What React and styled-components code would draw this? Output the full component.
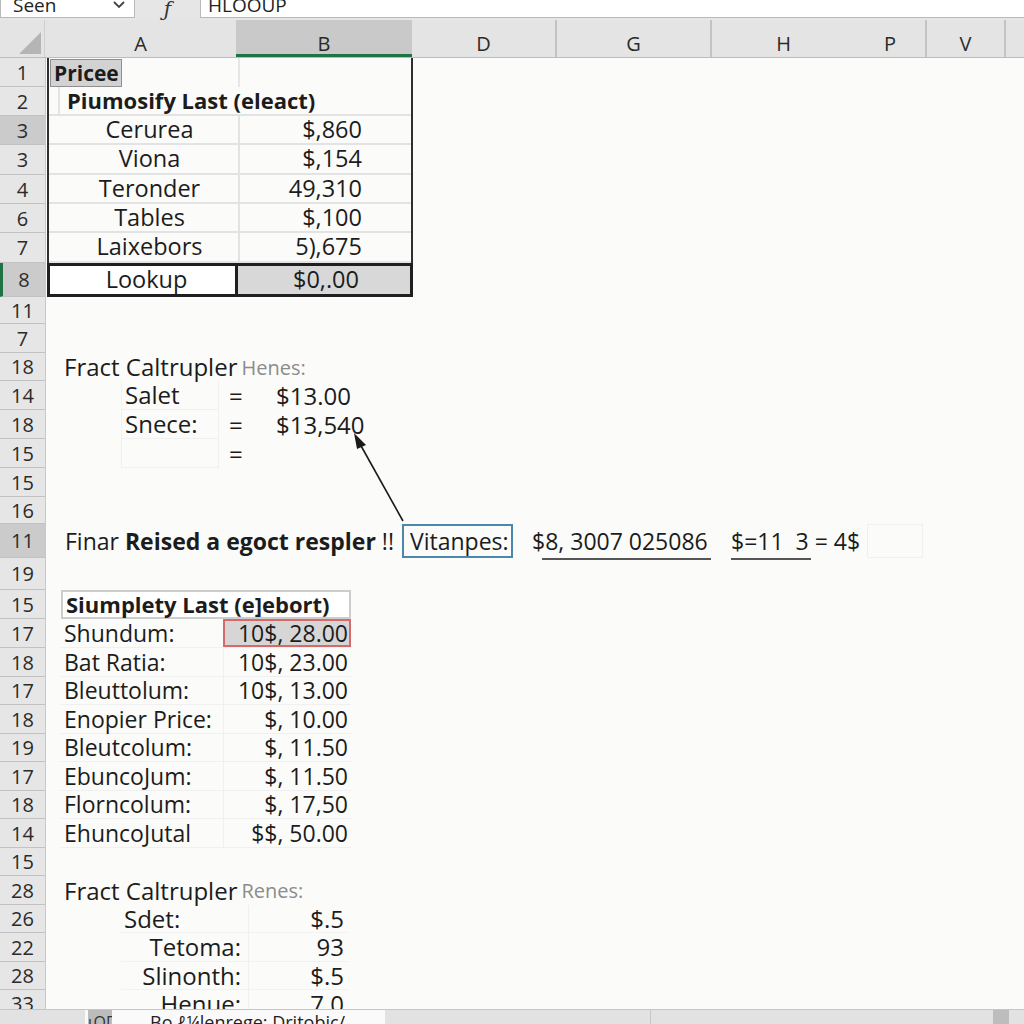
import React from 'react';
import styled, { createGlobalStyle, css } from 'styled-components';

const GlobalStyle = createGlobalStyle`
  html, body {
    margin: 0;
    padding: 0;
    background: #fbfbf9;
  }
  body {
    font-family: "Open Sans", "Noto Sans", sans-serif;
    line-height: 1.15;
    color: #1c1c1c;
  }
`;

const Window = styled.div`
  width: 1024px;
  height: 1024px;
  position: relative;
  overflow: hidden;
  background: #fbfbf9;
  display: flex;
  flex-direction: column;
`;

/* ---------- formula bar ---------- */

const FormulaBar = styled.div`
  height: 20px;
  flex: none;
  background: #e6e6e6;
  display: flex;
  align-items: flex-end;
  padding-bottom: 2px;
  box-sizing: border-box;
  overflow: hidden;
`;

const NameBox = styled.div`
  width: 135px;
  height: 30px;
  background: #fff;
  border: 1px solid #b9b9b9;
  box-sizing: border-box;
  display: flex;
  align-items: flex-end;
  justify-content: space-between;
  padding: 0 8px 1px 12px;
  font-size: 19px;
  line-height: 22px;
  color: #222;
`;

const Chevron = styled.svg`
  width: 14px;
  height: 10px;
  margin-bottom: 6px;
`;

const FxGlyph = styled.div`
  width: 65px;
  text-align: center;
  font-family: "DejaVu Serif", serif;
  font-style: italic;
  font-size: 20px;
  line-height: 18px;
  color: #333;
`;

const FormulaInput = styled.div`
  flex: 1;
  height: 30px;
  background: #fff;
  border: 1px solid #b9b9b9;
  border-right: none;
  box-sizing: border-box;
  display: flex;
  align-items: flex-end;
  padding: 0 0 1px 7px;
  font-size: 19px;
  line-height: 22px;
  color: #222;
`;

/* ---------- column header ---------- */

const HeaderRow = styled.div`
  height: 38px;
  flex: none;
  display: flex;
  background: #e4e4e4;
  border-bottom: 1px solid #bdbdbd;
  box-sizing: border-box;
`;

const Corner = styled.div`
  width: 45px;
  flex: none;
  border-right: 1px solid #cfcfcf;
  display: flex;
  align-items: flex-end;
  justify-content: flex-end;
  padding: 0 3px 3px 0;
  box-sizing: border-box;
`;

const ColHead = styled.div`
  width: ${p => p.$w}px;
  flex: none;
  display: flex;
  align-items: center;
  justify-content: center;
  padding-top: 10px;
  box-sizing: border-box;
  font-size: 20px;
  color: #2a2a2a;
  border-left: ${p => (p.$line ? '2px solid #c3c3c3' : 'none')};
  ${p =>
    p.$active &&
    css`
      background: #c9c9c9;
      border-bottom: 3px solid #217346;
      padding-top: 13px;
    `}
`;

/* ---------- sheet body ---------- */

const Sheet = styled.div`
  flex: 1;
  display: flex;
  overflow: hidden;
`;

const RowHeads = styled.div`
  width: 45px;
  flex: none;
  display: flex;
  flex-direction: column;
  background: #e6e6e6;
  border-right: 1px solid #c8c8c8;
`;

const RowHead = styled.div`
  height: ${p => p.$h}px;
  flex: none;
  box-sizing: border-box;
  display: flex;
  align-items: center;
  justify-content: center;
  font-size: 20px;
  color: #2b2b2b;
  border-bottom: 1px solid #c2c2c2;
  ${p =>
    p.$active &&
    css`
      background: #cbcbcb;
    `}
  ${p =>
    p.$selected &&
    css`
      border-left: 3px solid #217346;
    `}
`;

const Canvas = styled.div`
  flex: 1;
  display: flex;
  flex-direction: column;
`;

const Spacer = styled.div`
  height: ${p => p.$h}px;
  flex: none;
`;

/* ---------- table 1 ---------- */

const Frame = styled.div`
  width: 366px;
  margin-left: 1px;
  border-left: 2px solid #2f2f2f;
  border-right: 2px solid #2f2f2f;
  box-sizing: border-box;
  display: flex;
  flex-direction: column;
  flex: none;
`;

const TRow = styled.div`
  height: ${p => p.$h}px;
  display: flex;
  flex: none;
  box-sizing: border-box;
  font-size: 23.5px;
  border-bottom: ${p => (p.$line ? '2px solid #e3e3e3' : 'none')};
`;

const TCell = styled.div`
  width: ${p => p.$w}px;
  flex: none;
  box-sizing: border-box;
  display: flex;
  align-items: center;
  justify-content: ${p => p.$justify || 'flex-start'};
  padding: ${p => p.$pad || '0'};
  font-weight: ${p => (p.$bold ? 700 : 400)};
  font-size: ${p => (p.$bold ? '22px' : 'inherit')};
  border-left: ${p => p.$divider || 'none'};
`;

const InnerRule = styled.span`
  align-self: stretch;
  border-left: 2px solid #e3e3e3;
  margin: 0 7px 0 -8px;
`;

const PriceChip = styled.div`
  margin: 1px 0 0 1px;
  padding: 0 2px 0 3px;
  height: 26px;
  display: flex;
  align-items: center;
  background: #d2d2d2;
  border: 1px solid #8f8f8f;
  font-weight: 700;
  font-size: 21px;
`;

const LookupRow = styled.div`
  height: 34px;
  display: flex;
  flex: none;
  margin-left: -2px;
  margin-right: -2px;
  font-size: 23.5px;
`;

const LookupCell = styled.div`
  width: ${p => p.$w}px;
  box-sizing: border-box;
  border: 3px solid #1f1f1f;
  margin-left: ${p => (p.$shift ? '-3px' : '0')};
  background: ${p => (p.$fill ? '#d8d8d8' : '#fff')};
  display: flex;
  align-items: center;
  justify-content: center;
  padding: ${p => p.$pad || '0'};
`;

/* ---------- calculator blocks ---------- */

const Block = styled.div`
  display: flex;
  flex-direction: column;
  flex: none;
  font-size: 24px;
`;

const BlockTitle = styled.div`
  height: ${p => p.$h || 28}px;
  display: flex;
  align-items: center;
  padding-left: 18px;
  white-space: pre;
`;

const Muted = styled.span`
  color: #8c8c8c;
  font-size: 20px;
  margin-left: 4px;
`;

const CalcRow = styled.div`
  height: ${p => p.$h || 29}px;
  display: flex;
  align-items: center;
`;

const CalcLabel = styled.div`
  width: 98px;
  height: 100%;
  margin-left: 75px;
  box-sizing: border-box;
  display: flex;
  align-items: center;
  padding-left: 3px;
  border: 1px solid #f0f0f0;
  border-top: none;
`;

const Equals = styled.div`
  width: 57px;
  padding-left: 10px;
  box-sizing: border-box;
`;

const CalcValue = styled.div``;

/* ---------- result row ---------- */

const ResultRow = styled.div`
  height: 34px;
  display: flex;
  align-items: center;
  flex: none;
  font-size: 23px;
  white-space: pre;
`;

const ResultText = styled.div`
  width: 356px;
  padding-left: 19px;
  box-sizing: border-box;
`;

const Bold = styled.b`
  font-weight: 700;
`;

const FocusBox = styled.div`
  height: 34px;
  width: 111px;
  box-sizing: border-box;
  border: 2px solid #4d87a9;
  display: flex;
  align-items: center;
  padding-left: 6px;
`;

const Underlined = styled.div`
  position: relative;
  margin-left: ${p => p.$ml}px;
  width: ${p => p.$w}px;
  &::after {
    content: '';
    position: absolute;
    left: ${p => p.$ul}px;
    width: ${p => p.$ulw}px;
    bottom: -6px;
    border-bottom: 2px solid #555;
  }
`;

const GhostBox = styled.div`
  width: 56px;
  height: 34px;
  margin-left: 10px;
  border: 1px solid #f0f0f0;
  box-sizing: border-box;
`;

/* ---------- table 2 ---------- */

const ListTable = styled.div`
  margin-left: 15px;
  width: 290px;
  display: flex;
  flex-direction: column;
  flex: none;
  font-size: 23px;
`;

const ListTitle = styled.div`
  height: 29px;
  box-sizing: border-box;
  border: 2px solid #cdcdcd;
  background: #fff;
  display: flex;
  align-items: center;
  padding-left: 3px;
  font-weight: 700;
  font-size: 22px;
`;

const ListRow = styled.div`
  height: ${p => p.$h}px;
  display: flex;
  box-sizing: border-box;
  border-bottom: 1px solid #f0f0f0;
`;

const ListLabel = styled.div`
  width: 162px;
  display: flex;
  align-items: center;
  padding-left: 3px;
  box-sizing: border-box;
  white-space: nowrap;
`;

const ListValue = styled.div`
  flex: 1;
  display: flex;
  align-items: center;
  justify-content: flex-end;
  padding-right: 3px;
  box-sizing: border-box;
  border-left: 1px solid #f0f0f0;
  white-space: pre;
  ${p =>
    p.$hot &&
    css`
      background: #d6d6d6;
      border: 2px solid #d66a6a;
      padding-right: 1px;
    `}
`;

/* ---------- lower block ---------- */

const SumRow = styled.div`
  height: ${p => p.$h}px;
  display: flex;
  align-items: center;
  flex: none;
`;

const SumLabel = styled.div`
  width: 127px;
  margin-left: 75px;
  height: 100%;
  box-sizing: border-box;
  display: flex;
  align-items: center;
  justify-content: ${p => (p.$left ? 'flex-start' : 'flex-end')};
  padding: 0 7px 0 3px;
  border-bottom: 1px solid #f2f2f2;
  white-space: nowrap;
`;

const SumValue = styled.div`
  width: 100px;
  height: 100%;
  box-sizing: border-box;
  display: flex;
  align-items: center;
  justify-content: flex-end;
  padding-right: 4px;
  border-left: 1px solid #f0f0f0;
  border-bottom: 1px solid #f2f2f2;
`;

/* ---------- sheet tabs ---------- */

const TabBar = styled.div`
  height: 14px;
  flex: none;
  display: flex;
  background: #e2e2e2;
  border-top: 1px solid #c6c6c6;
  overflow: hidden;
`;

const Tab = styled.div`
  width: 300px;
  margin-left: 85px;
  background: #fafafa;
  display: flex;
  overflow: hidden;
`;

const TabNav = styled.div`
  width: 24px;
  margin-left: 3px;
  background: #bcbcbc;
  font-size: 16px;
  line-height: 24px;
  color: #333;
  overflow: hidden;
  white-space: nowrap;
  text-align: center;
`;

const TabLabel = styled.div`
  padding-left: 38px;
  font-size: 18px;
  line-height: 24px;
  white-space: nowrap;
  color: #222;
  overflow: hidden;
`;

const TabRest = styled.div`
  width: 265px;
  border-right: 1px solid #c6c6c6;
`;

const Scroll = styled.div`
  margin-left: auto;
  width: 16px;
  margin-right: 15px;
  background: #bdbdbd;
`;

const ArrowLayer = styled.svg`
  position: absolute;
  left: 0;
  top: 0;
  width: 1024px;
  height: 1024px;
  pointer-events: none;
`;

const columns = [
  { l: 'A', w: 191 },
  { l: 'B', w: 176, active: true },
  { l: 'D', w: 143 },
  { l: 'G', w: 155, line: true },
  { l: 'H', w: 145, line: true },
  { l: 'P', w: 70 },
  { l: 'V', w: 79, line: true },
  { l: '', w: 20, line: true },
];

const rows = [
  ['1', 29], ['2', 29], ['3', 29, 'active'], ['3', 30], ['4', 29], ['6', 29], ['7', 30],
  ['8', 34, 'selected'], ['11', 27], ['7', 29], ['18', 28], ['14', 29], ['18', 29],
  ['15', 29], ['15', 29], ['16', 27], ['11', 34, 'active'], ['19', 32], ['15', 29],
  ['17', 29], ['18', 29], ['17', 28], ['18', 29], ['19', 28], ['17', 29], ['18', 28],
  ['14', 29], ['15', 28], ['28', 29], ['26', 28], ['22', 29], ['28', 28], ['33', 28],
];

const prices = [
  ['Cerurea', '$,860', 29],
  ['Viona', '$,154', 30],
  ['Teronder', '49,310', 29],
  ['Tables', '$,100', 29],
  ['Laixebors', '5),675', 30],
];

const costs = [
  ['Shundum:', '10$, 28.00', 29, true],
  ['Bat Ratia:', '10$, 23.00', 29],
  ['Bleuttolum:', '10$, 13.00', 28],
  ['Enopier Price:', '$, 10.00', 29],
  ['Bleutcolum:', '$, 11.50', 28],
  ['EbuncoJum:', '$, 11.50', 29],
  ['Florncolum:', '$, 17,50', 28],
  ['EhuncoJutal', '$$, 50.00', 29],
];

const totals = [
  ['Sdet:', '$.5', 28, true],
  ['Tetoma:', '93', 29],
  ['Slinonth:', '$.5', 28],
  ['Henue:', '7.0', 28],
];

export default function App() {
  return (
    <Window>
      <GlobalStyle />

      <FormulaBar>
        <NameBox>
          <span>Seen</span>
          <Chevron viewBox="0 0 14 10">
            <path d="M2 2 L7 7 L12 2" fill="none" stroke="#444" strokeWidth="1.8" />
          </Chevron>
        </NameBox>
        <FxGlyph>ƒ</FxGlyph>
        <FormulaInput>HLOOUP</FormulaInput>
      </FormulaBar>

      <HeaderRow>
        <Corner>
          <svg width="22" height="22" viewBox="0 0 22 22">
            <path d="M22 0 L22 22 L0 22 Z" fill="#b5b5b5" />
          </svg>
        </Corner>
        {columns.map((c, i) => (
          <ColHead key={i} $w={c.w} $active={c.active} $line={c.line}>
            {c.l}
          </ColHead>
        ))}
      </HeaderRow>

      <Sheet>
        <RowHeads>
          {rows.map(([label, h, state], i) => (
            <RowHead
              key={i}
              $h={h}
              $active={state === 'active' || state === 'selected'}
              $selected={state === 'selected'}
            >
              {label}
            </RowHead>
          ))}
        </RowHeads>

        <Canvas>
          <Frame>
            <TRow $h={29}>
              <TCell $w={189}>
                <PriceChip>Pricee</PriceChip>
              </TCell>
              <TCell $w={173} $divider="2px solid #e6e6e6" />
            </TRow>
            <TRow $h={29} $line>
              <TCell $w={362} $bold $pad="0 0 0 17px">
                <InnerRule />
                Piumosify Last (eleact)
              </TCell>
            </TRow>
            {prices.map(([name, val, h]) => (
              <TRow key={name} $h={h} $line>
                <TCell $w={189} $justify="center" $pad="0 0 0 12px">
                  {name}
                </TCell>
                <TCell $w={173} $justify="flex-end" $pad="0 49px 0 0" $divider="2px solid #e3e3e3">
                  {val}
                </TCell>
              </TRow>
            ))}
            <LookupRow>
              <LookupCell $w={192} $pad="0 0 0 8px">Lookup</LookupCell>
              <LookupCell $w={179} $shift $fill $pad="0 0 0 4px">$0,.00</LookupCell>
            </LookupRow>
          </Frame>

          <Spacer $h={56} />

          <Block>
            <BlockTitle>
              Fract Caltrupler<Muted>Henes:</Muted>
            </BlockTitle>
            <CalcRow>
              <CalcLabel>Salet</CalcLabel>
              <Equals>=</Equals>
              <CalcValue>$13.00</CalcValue>
            </CalcRow>
            <CalcRow>
              <CalcLabel>Snece:</CalcLabel>
              <Equals>=</Equals>
              <CalcValue>$13,540</CalcValue>
            </CalcRow>
            <CalcRow>
              <CalcLabel />
              <Equals>=</Equals>
            </CalcRow>
          </Block>

          <Spacer $h={56} />

          <ResultRow>
            <ResultText>
              Finar <Bold>Reised a egoct respler</Bold> !!
            </ResultText>
            <FocusBox>Vitanpes:</FocusBox>
            <Underlined $ml={19} $w={179} $ul={10} $ulw={169}>
              $8, 3007 025086
            </Underlined>
            <Underlined $ml={20} $w={126} $ul={0} $ulw={80}>
              $=11  3 = 4$
            </Underlined>
            <GhostBox />
          </ResultRow>

          <Spacer $h={32} />

          <ListTable>
            <ListTitle>Siumplety Last (e]ebort)</ListTitle>
            {costs.map(([label, val, h, hot]) => (
              <ListRow key={label} $h={h}>
                <ListLabel>{label}</ListLabel>
                <ListValue $hot={hot}>{val}</ListValue>
              </ListRow>
            ))}
          </ListTable>

          <Spacer $h={28} />

          <Block>
            <BlockTitle $h={29}>
              Fract Caltrupler<Muted>Renes:</Muted>
            </BlockTitle>
            {totals.map(([label, val, h, left]) => (
              <SumRow key={label} $h={h}>
                <SumLabel $left={left}>{label}</SumLabel>
                <SumValue>{val}</SumValue>
              </SumRow>
            ))}
          </Block>
        </Canvas>
      </Sheet>

      <TabBar>
        <Tab>
          <TabNav>ιOΓ</TabNav>
          <TabLabel>Bo ℓ¼lenrege: Dritobic/</TabLabel>
        </Tab>
        <TabRest />
        <Scroll />
      </TabBar>

      <ArrowLayer viewBox="0 0 1024 1024">
        <line x1="403" y1="521" x2="360" y2="444" stroke="#1a1a1a" strokeWidth="1.6" />
        <path d="M354 433 L366 445 L357 449 Z" fill="#1a1a1a" />
      </ArrowLayer>
    </Window>
  );
}
